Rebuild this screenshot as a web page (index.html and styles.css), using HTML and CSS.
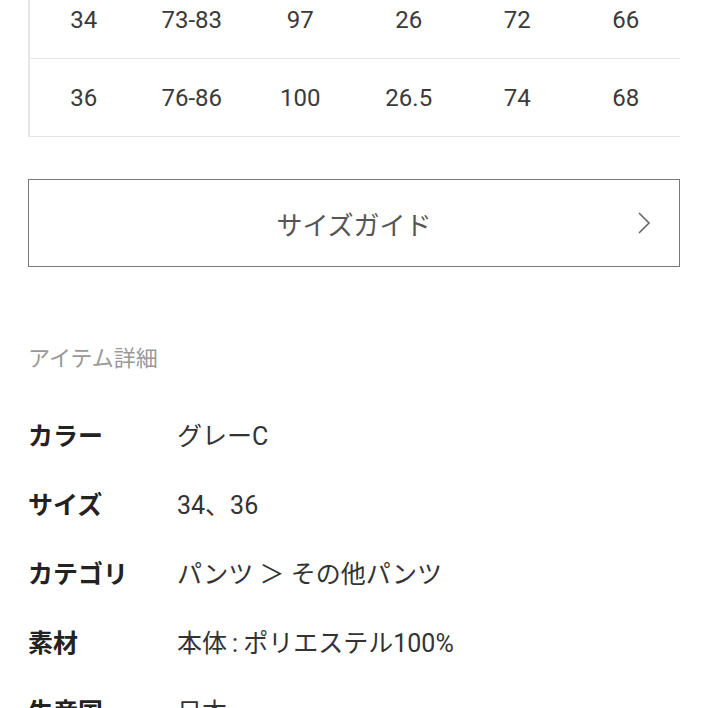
FILE: index.html
```html
<!DOCTYPE html>
<html lang="ja">
<head>
    <meta charset="UTF-8">
    <meta name="viewport" content="width=device-width, initial-scale=1.0">
    <title>アイテム詳細</title>
    <link rel="stylesheet" href="styles.css">
</head>
<body>
    <table class="size-table">
        <tr>
            <td>34</td><td>73-83</td><td>97</td><td>26</td><td>72</td><td>66</td>
        </tr>
        <tr>
            <td>36</td><td>76-86</td><td>100</td><td>26.5</td><td>74</td><td>68</td>
        </tr>
    </table>

    <a class="guide-btn" href="#">
        <span>サイズガイド</span>
        <svg class="chevron" width="14" height="24" viewBox="0 0 14 24">
            <polyline points="2,2 12,12 2,22" fill="none" stroke="#666" stroke-width="1.6"/>
        </svg>
    </a>

    <h3 class="section-title">アイテム詳細</h3>

    <div class="details">
        <div class="row"><div class="label">カラー</div><div class="value">グレーC</div></div>
        <div class="row"><div class="label">サイズ</div><div class="value">34、36</div></div>
        <div class="row"><div class="label">カテゴリ</div><div class="value">パンツ ＞ その他パンツ</div></div>
        <div class="row"><div class="label">素材</div><div class="value">本体&thinsp;:&thinsp;ポリエステル100%</div></div>
        <div class="row"><div class="label">生産国</div><div class="value">日本</div></div>
    </div>
</body>
</html>
```
FILE: styles.css
```css
body {
    margin: 0;
    padding: 0 28px;
    background: #fff;
    color: #333;
    font-family: Roboto, "Noto Sans CJK JP", sans-serif;
    overflow: hidden;
}

.size-table {
    width: 652px;
    margin-top: -19px;
    border-collapse: collapse;
    border-left: 2px solid #e6e6e6;
    table-layout: fixed;
}

.size-table td {
    height: 77px;
    padding: 0;
    text-align: center;
    font-size: 24px;
    color: #3a3a3a;
    border-bottom: 1px solid #e6e6e6;
}

.guide-btn {
    margin-top: 42px;
    height: 86px;
    border: 1px solid #7a7a7a;
    display: flex;
    align-items: center;
    justify-content: center;
    position: relative;
    text-decoration: none;
    color: #555;
    font-size: 26px;
}

.chevron {
    position: absolute;
    right: 28px;
    top: 31px;
}

.section-title {
    margin: 77px 0 0;
    line-height: 30px;
    font-size: 22px;
    font-weight: normal;
    color: #999;
}

.details {
    margin-top: 25px;
}

.row {
    height: 69px;
    display: flex;
    align-items: center;
}

.label {
    width: 149px;
    font-size: 25px;
    font-weight: bold;
    color: #222;
}

.value {
    font-size: 25px;
    color: #333;
}
```
